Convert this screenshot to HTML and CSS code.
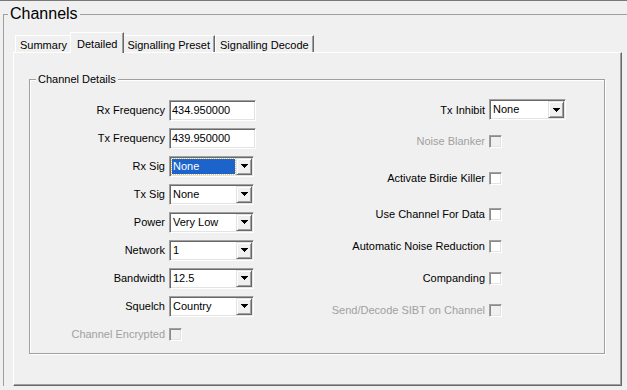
FILE: index.html
```html
<!DOCTYPE html>
<html lang="en">
<head>
  <meta charset="UTF-8" />
  <title>Channels</title>
  <link rel="stylesheet" href="styles.css">
</head>
<body>
  <div class="topbar"></div>
  <fieldset class="channels">
    <legend>Channels</legend>
    <div class="tabs">
      <div class="tab">Summary</div>
      <div class="tab active">Detailed</div>
      <div class="tab">Signalling Preset</div>
      <div class="tab">Signalling Decode</div>
    </div>
    <div class="panel">
      <fieldset class="details">
        <legend>Channel Details</legend>
        <div class="cols">
          <div class="col left">
            <div class="row"><span class="lbl">Rx Frequency</span><input class="text" type="text" value="434.950000" readonly></div>
            <div class="row"><span class="lbl">Tx Frequency</span><input class="text" type="text" value="439.950000" readonly></div>
            <div class="row"><span class="lbl">Rx Sig</span>
              <div class="combo"><span class="val focus">None</span><span class="drop"><svg width="7" height="4"><path d="M0 0h7v1H0zM1 1h5v1H1zM2 2h3v1H2zM3 3h1v1H3z"/></svg></span></div>
            </div>
            <div class="row"><span class="lbl">Tx Sig</span>
              <div class="combo"><span class="val">None</span><span class="drop"><svg width="7" height="4"><path d="M0 0h7v1H0zM1 1h5v1H1zM2 2h3v1H2zM3 3h1v1H3z"/></svg></span></div>
            </div>
            <div class="row"><span class="lbl">Power</span>
              <div class="combo"><span class="val">Very Low</span><span class="drop"><svg width="7" height="4"><path d="M0 0h7v1H0zM1 1h5v1H1zM2 2h3v1H2zM3 3h1v1H3z"/></svg></span></div>
            </div>
            <div class="row"><span class="lbl">Network</span>
              <div class="combo"><span class="val">1</span><span class="drop"><svg width="7" height="4"><path d="M0 0h7v1H0zM1 1h5v1H1zM2 2h3v1H2zM3 3h1v1H3z"/></svg></span></div>
            </div>
            <div class="row"><span class="lbl">Bandwidth</span>
              <div class="combo"><span class="val">12.5</span><span class="drop"><svg width="7" height="4"><path d="M0 0h7v1H0zM1 1h5v1H1zM2 2h3v1H2zM3 3h1v1H3z"/></svg></span></div>
            </div>
            <div class="row"><span class="lbl">Squelch</span>
              <div class="combo"><span class="val">Country</span><span class="drop"><svg width="7" height="4"><path d="M0 0h7v1H0zM1 1h5v1H1zM2 2h3v1H2zM3 3h1v1H3z"/></svg></span></div>
            </div>
            <div class="row disabled"><span class="lbl">Channel Encrypted</span><span class="check"></span></div>
          </div>
          <div class="col right">
            <div class="row short"><span class="lbl">Tx Inhibit</span>
              <div class="combo narrow"><span class="val">None</span><span class="drop"><svg width="7" height="4"><path d="M0 0h7v1H0zM1 1h5v1H1zM2 2h3v1H2zM3 3h1v1H3z"/></svg></span></div>
            </div>
            <div class="row disabled"><span class="lbl">Noise Blanker</span><span class="check"></span></div>
            <div class="row spaced wide-gap"><span class="lbl">Activate Birdie Killer</span><span class="check"></span></div>
            <div class="row spaced"><span class="lbl">Use Channel For Data</span><span class="check"></span></div>
            <div class="row"><span class="lbl">Automatic Noise Reduction</span><span class="check"></span></div>
            <div class="row"><span class="lbl">Companding</span><span class="check"></span></div>
            <div class="row disabled"><span class="lbl">Send/Decode SIBT on Channel</span><span class="check"></span></div>
          </div>
        </div>
      </fieldset>
    </div>
  </fieldset>
</body>
</html>
```

FILE: styles.css
```css
* {
  box-sizing: border-box;
}
body {
  margin: 0;
  width: 627px;
  height: 390px;
  overflow: hidden;
  background: #f0f0f0;
  font-family: "Liberation Sans", Arial, sans-serif;
  font-size: 11px;
  color: #000;
}
.topbar {
  height: 1px;
  background: #787878;
}
.channels {
  margin: 3px 0 0 3px;
  padding: 0;
  border: 0;
  border-top: 1px solid #a0a0a0;
  border-left: 1px solid #a0a0a0;
  min-width: 0;
}
.channels > legend {
  font-size: 16px;
  line-height: 20px;
  padding: 0 2px;
  margin-left: 4px;
}
.tabs {
  position: relative;
  z-index: 1;
  display: flex;
  align-items: flex-end;
  height: 20px;
  margin: 8px 0 0 11px;
}
.tab {
  height: 17px;
  line-height: 19px;
  padding: 0 4px;
  border-top: 1px solid #fff;
  border-left: 1px solid #fff;
  border-right: 1px solid #696969;
  box-shadow: inset -1px 0 0 #a0a0a0;
  background: #f0f0f0;
  white-space: nowrap;
}
.tab.active {
  position: relative;
  height: 21px;
  margin: 0 -2px -1px;
  padding: 0 6px;
  line-height: 22px;
}
.panel {
  margin-left: 9px;
  width: 609px;
  height: 334px;
  padding: 19px 0 0 15px;
  border: 1px solid;
  border-color: #fff #696969 #696969 #fff;
  box-shadow: inset -1px -1px 0 #a0a0a0;
}
.details {
  margin: 0;
  width: 576px;
  height: 282px;
  padding: 0;
  border: 1px solid #a0a0a0;
  box-shadow: inset 1px 1px 0 #fff, 1px 1px 0 #fff;
  min-width: 0;
}
.details > legend {
  font-size: 11px;
  line-height: 14px;
  padding: 0 2px;
  margin-left: 6px;
  background: #f0f0f0;
}
.cols {
  display: flex;
}
.col.left {
  width: 275px;
  padding-top: 10px;
}
.col.right {
  padding-top: 8px;
}
.row {
  display: flex;
  align-items: center;
  height: 28px;
}
.col.right .row {
  height: 32px;
}
.col.right .row.short {
  height: 31px;
}
.col.right .row.spaced {
  margin-top: 4px;
}
.col.right .row.wide-gap {
  margin-top: 5px;
}
.lbl {
  width: 135px;
  margin-right: 4px;
  text-align: right;
  white-space: nowrap;
}
.col.right .lbl {
  width: 180px;
}
.disabled .lbl {
  color: #a0a0a0;
}
.text,
.combo {
  height: 21px;
  border: 1px solid;
  border-color: #a0a0a0 #fff #fff #a0a0a0;
  box-shadow: inset 1px 1px 0 #696969, inset -1px -1px 0 #e3e3e3;
  background: #fff;
}
.text {
  width: 87px;
  padding: 0 0 0 2px;
  font: inherit;
  color: #000;
  outline: none;
}
.combo {
  display: flex;
  width: 85px;
  padding: 2px;
}
.combo.narrow {
  width: 77px;
}
.val {
  flex: 1;
  line-height: 15px;
  padding-left: 1px;
  margin-right: 1px;
}
.val.focus {
  background: #1c64cc;
  color: #fff;
  outline: 1px dotted #d8c070;
}
.drop {
  display: flex;
  align-items: center;
  justify-content: center;
  width: 16px;
  margin: -1px -1px -1px 0;
  background: #f0f0f0;
  border: 1px solid;
  border-color: #e3e3e3 #696969 #696969 #e3e3e3;
  box-shadow: inset 1px 1px 0 #fff, inset -1px -1px 0 #a0a0a0;
}
.drop svg {
  display: block;
}
.check {
  width: 13px;
  height: 13px;
  border: 1px solid;
  border-color: #a0a0a0 #fff #fff #a0a0a0;
  box-shadow: inset 1px 1px 0 #8a8a8a, inset -1px -1px 0 #e3e3e3;
  background: #fff;
}
.disabled .check {
  background: #f0f0f0;
}
```
